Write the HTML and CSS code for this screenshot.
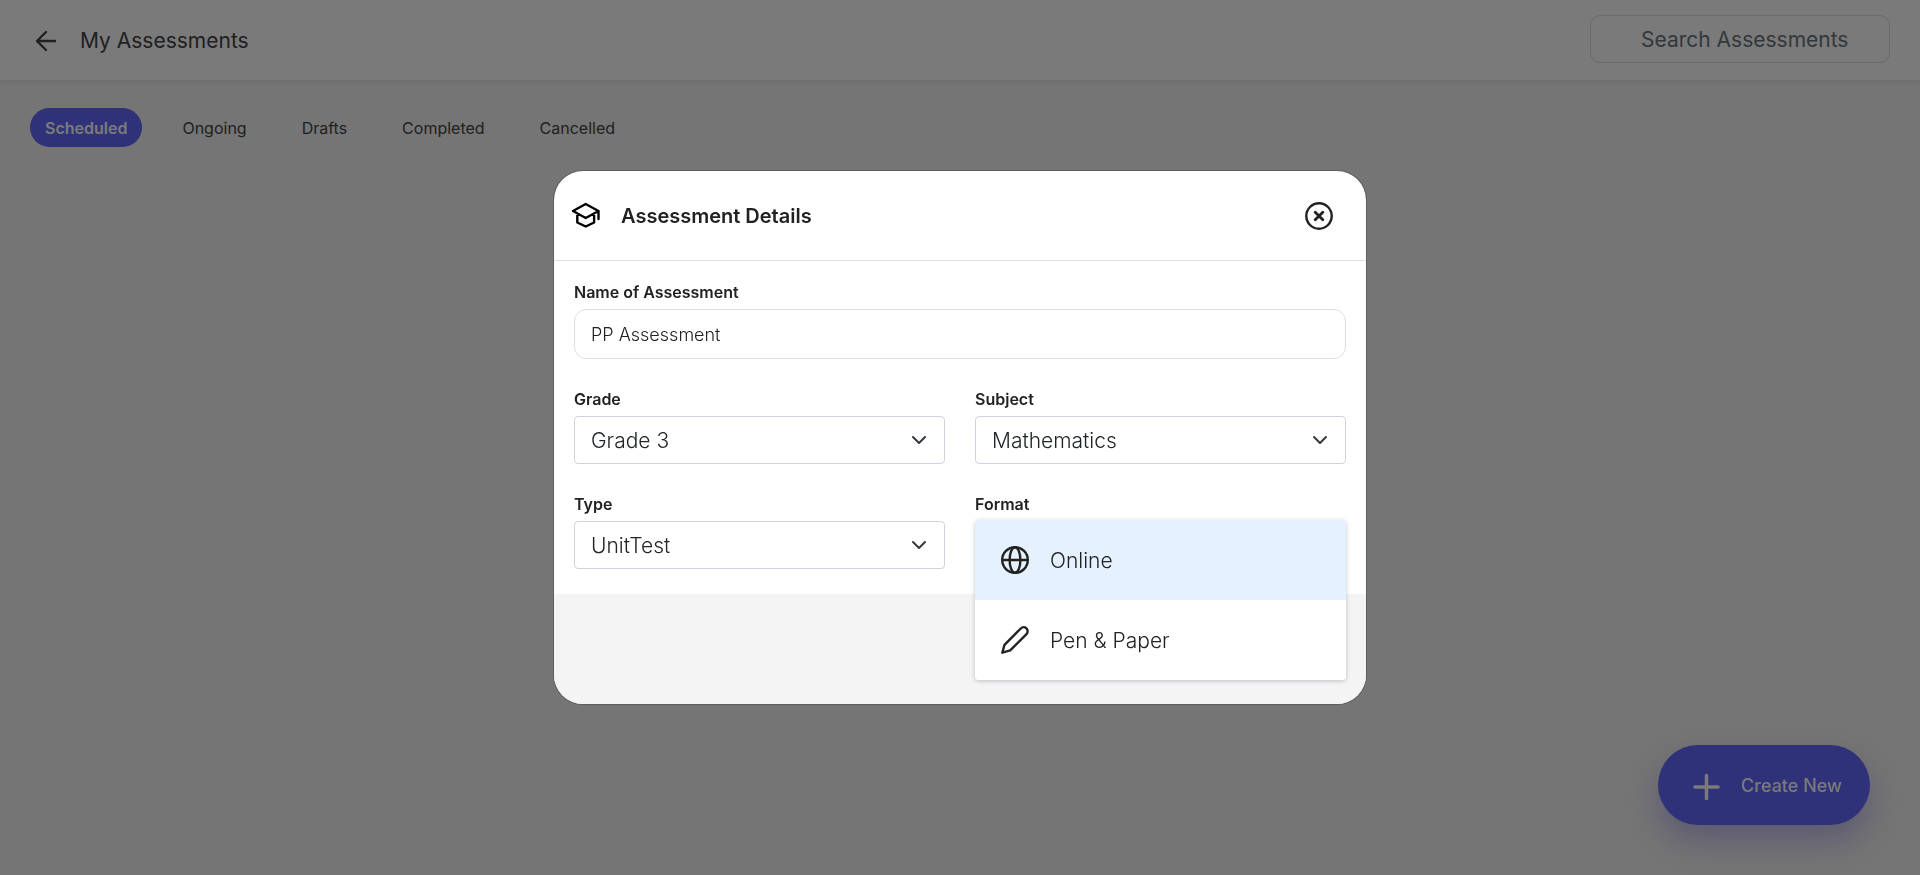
FILE: index.html
```html
<!DOCTYPE html>
<html lang="en">
<head>
<meta charset="utf-8">
<title>My Assessments</title>
<link rel="stylesheet" href="styles.css">
</head>
<body>
<div class="page">
  <header class="topbar">
    <button class="icon-button" type="button" aria-label="Back">
      <svg width="24" height="24" viewBox="0 0 24 24" fill="none" stroke="currentColor" stroke-width="2.400" stroke-linecap="round" stroke-linejoin="round"><path d="M21 13H3M12 22L3 13l9-9"/></svg>
    </button>
    <h1 class="page-title">My Assessments</h1>
    <input class="search" type="search" placeholder="Search Assessments" aria-label="Search Assessments">
  </header>
  <nav class="tabs">
    <button class="tab tab-active" type="button">Scheduled</button>
    <button class="tab" type="button">Ongoing</button>
    <button class="tab" type="button">Drafts</button>
    <button class="tab" type="button">Completed</button>
    <button class="tab" type="button">Cancelled</button>
  </nav>
  <button class="create" type="button">
    <svg width="30" height="30" viewBox="0 0 30 30" fill="none" stroke="currentColor" stroke-width="3.500" stroke-linecap="round"><path d="M4 17h23M15.500 5.500v23"/></svg>
    <span>Create New</span>
  </button>
</div>
<div class="overlay">
  <section class="dialog" role="dialog" aria-modal="true" aria-labelledby="dialog-title">
    <header class="dialog-header">
      <svg class="dialog-icon" width="30" height="30" viewBox="0 0 30 30" fill="none" stroke="#000" stroke-width="2.400" stroke-linejoin="round" stroke-linecap="round"><path d="M15.700 3L28.500 10L15.700 17L3 10ZM7.300 12.500v9L15.700 25.500l8.400-4V12.500M28.500 10V18"/></svg>
      <h2 class="dialog-title" id="dialog-title">Assessment Details</h2>
      <button class="icon-button" type="button" aria-label="Close">
        <svg width="30" height="30" viewBox="0 0 30 30" fill="none" stroke="currentColor" stroke-width="2.400" stroke-linecap="round"><circle cx="15" cy="15" r="12.700"/><path stroke-width="2.800" d="M11.200 11.200l7.600 7.600M18.800 11.200l-7.600 7.600"/></svg>
      </button>
    </header>
    <form class="dialog-body">
      <div class="field field-wide">
        <label for="name">Name of Assessment</label>
        <input class="text-input" id="name" type="text" value="PP Assessment">
      </div>
      <div class="field">
        <label for="grade">Grade</label>
        <div class="select-box">
          <select id="grade"><option>Grade 3</option></select>
          <svg class="chevron" width="16" height="16" viewBox="0 0 16 16" fill="none" stroke="#343a40" stroke-width="2" stroke-linecap="round" stroke-linejoin="round"><path d="M2 5l6 6 6-6"/></svg>
        </div>
      </div>
      <div class="field">
        <label for="subject">Subject</label>
        <div class="select-box">
          <select id="subject"><option>Mathematics</option></select>
          <svg class="chevron" width="16" height="16" viewBox="0 0 16 16" fill="none" stroke="#343a40" stroke-width="2" stroke-linecap="round" stroke-linejoin="round"><path d="M2 5l6 6 6-6"/></svg>
        </div>
      </div>
      <div class="field">
        <label for="type">Type</label>
        <div class="select-box">
          <select id="type"><option>UnitTest</option></select>
          <svg class="chevron" width="16" height="16" viewBox="0 0 16 16" fill="none" stroke="#343a40" stroke-width="2" stroke-linecap="round" stroke-linejoin="round"><path d="M2 5l6 6 6-6"/></svg>
        </div>
      </div>
      <div class="field">
        <span class="label" id="format-label">Format</span>
        <div class="select-box">
          <div class="menu" role="listbox" aria-labelledby="format-label">
            <button class="option option-active" type="button" role="option" aria-selected="true">
              <svg width="30" height="30" viewBox="0 0 30 30" fill="none" stroke="currentColor" stroke-width="2.400"><circle cx="15" cy="15" r="12.800"/><ellipse cx="15" cy="15" rx="5.400" ry="12.800"/><path d="M2 15h26"/></svg>
              <span>Online</span>
            </button>
            <button class="option" type="button" role="option" aria-selected="false">
              <svg width="30" height="30" viewBox="0 0 30 30" fill="none" stroke="currentColor" stroke-width="2.400" stroke-linejoin="round"><path d="M20.800 3.500a3.900 3.900 0 0 1 5.700 5.600L10.200 25.400L2.300 27.700L4.500 19.800Z"/></svg>
              <span>Pen &amp; Paper</span>
            </button>
          </div>
        </div>
      </div>
    </form>
    <footer class="dialog-footer"></footer>
  </section>
</div>
</body>
</html>
```
FILE: styles.css
```css
* { box-sizing: border-box; }

body {
  margin: 0;
  background: #f4f4f4;
  color: #222;
  font-family: Inter, "Liberation Sans", sans-serif;
}

button, input, select { font: inherit; color: inherit; }

.page {
  min-height: 100vh;
  color: #444;
}

.topbar {
  display: flex;
  align-items: center;
  height: 80px;
  padding: 0 30px 0 34px;
  background: #fff;
  box-shadow: 0 2px 6px rgba(0, 0, 0, 0.08);
}

.icon-button {
  display: flex;
  padding: 0;
  border: 0;
  background: none;
}

.page-title {
  margin: 0 auto 0 22px;
  font-size: 21px;
  font-weight: 400;
}

.search {
  width: 300px;
  height: 48px;
  margin-bottom: 2px;
  padding: 0 20px 0 50px;
  border: 1px solid #dedede;
  border-radius: 10px;
  background: #fff;
  font-size: 21px;
}

.search::placeholder { color: #6c757d; opacity: 1; }

.tabs {
  display: flex;
  gap: 25px;
  padding: 28px 30px;
}

.tab {
  height: 39px;
  padding: 0 15px;
  border: 0;
  border-radius: 20px;
  background: none;
  font-size: 16px;
}

.tab-active {
  background: #6268fc;
  color: #fff;
  font-weight: 600;
}

.create {
  position: fixed;
  right: 50px;
  bottom: 50px;
  display: flex;
  align-items: center;
  gap: 20px;
  height: 80px;
  padding: 0 28px 0 33px;
  border: 0;
  border-radius: 40px;
  background: #6268fc;
  box-shadow: 0 16px 32px rgba(98, 84, 220, 0.35);
  color: #fff;
  font-size: 18px;
  font-weight: 500;
}

.overlay {
  position: fixed;
  inset: 0;
  display: flex;
  align-items: center;
  justify-content: center;
  background: rgba(0, 0, 0, 0.52);
}

.dialog {
  width: 814px;
  max-width: 100%;
  border: 1px solid rgba(0, 0, 0, 0.2);
  border-radius: 30px;
  background: #fff;
  background-clip: padding-box;
}

.dialog-header {
  display: flex;
  align-items: center;
  height: 90px;
  padding: 0 32px 0 16px;
  border-bottom: 1px solid #dee2e6;
}

.dialog-title {
  margin: 0 auto 0 21px;
  font-size: 20px;
  font-weight: 600;
}

.dialog-body {
  display: grid;
  grid-template-columns: 1fr 1fr;
  gap: 28px 30px;
  padding: 19px 20px 25px;
}

.field { display: grid; gap: 5px; }

.field-wide { grid-column: 1 / -1; }

.field label, .label {
  font-size: 16px;
  font-weight: 600;
  line-height: 24px;
}

.text-input {
  width: 100%;
  height: 50px;
  padding: 0 16px;
  border: 1px solid #dedede;
  border-radius: 12px;
  background: #fff;
  font-size: 18px;
  font-weight: 300;
}

.select-box { position: relative; height: 48px; }

.select-box select {
  width: 100%;
  height: 100%;
  padding: 0 48px 0 16px;
  border: 1px solid #ced4da;
  border-radius: 4px;
  background: #fff;
  color: #212529;
  font-size: 21px;
  font-weight: 300;
  appearance: none;
}

.chevron {
  position: absolute;
  top: 16px;
  right: 18px;
  pointer-events: none;
}

.menu {
  position: absolute;
  top: -1px;
  left: 0;
  right: 0;
  border-radius: 4px;
  background: #fff;
  box-shadow: 0 1px 4px rgba(50, 60, 80, 0.3);
  overflow: hidden;
}

.option {
  display: flex;
  align-items: center;
  gap: 20px;
  width: 100%;
  height: 80px;
  padding: 0 25px;
  border: 0;
  background: #fff;
  font-size: 21px;
  font-weight: 300;
}

.option-active { background: #e5f1fe; }

.dialog-footer {
  height: 110px;
  border-radius: 0 0 29px 29px;
  background: #f4f4f4;
}
```
